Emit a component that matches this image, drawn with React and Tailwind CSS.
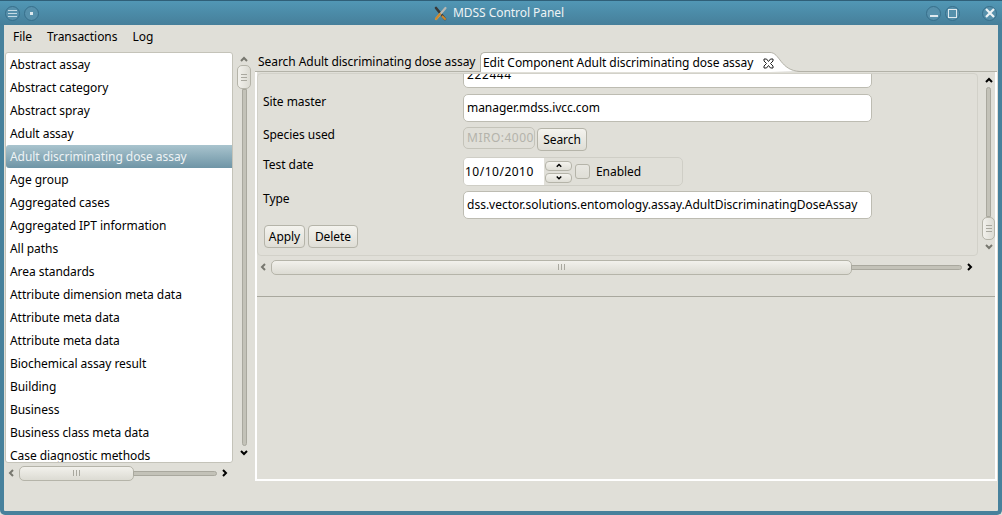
const entities = [
  'Abstract assay',
  'Abstract category',
  'Abstract spray',
  'Adult assay',
  'Adult discriminating dose assay',
  'Age group',
  'Aggregated cases',
  'Aggregated IPT information',
  'All paths',
  'Area standards',
  'Attribute dimension meta data',
  'Attribute meta data',
  'Attribute meta data',
  'Biochemical assay result',
  'Building',
  'Business',
  'Business class meta data',
  'Case diagnostic methods',
];

const Chevron = ({ dir, className = 'text-black' }) => {
  const paths = {
    up: 'M1 5 L4 2 L7 5',
    down: 'M1 2 L4 5 L7 2',
    left: 'M5 1 L2 4 L5 7',
    right: 'M3 1 L6 4 L3 7',
  };
  return (
    <svg width="8" height="8" viewBox="0 0 8 8" fill="none" stroke="currentColor" strokeWidth="2" className={className}>
      <path d={paths[dir]} />
    </svg>
  );
};

const Grip = ({ vertical }) => (
  <div className={vertical ? 'flex flex-col gap-[2px]' : 'flex gap-[2px]'}>
    {[0, 1, 2].map((i) => (
      <div key={i} className={vertical ? 'h-px w-[6px] bg-[#a9a89f]' : 'h-[6px] w-px bg-[#a9a89f]'} />
    ))}
  </div>
);

const TitleButton = ({ children, className = '' }) => (
  <div className={`flex h-[15px] w-[15px] items-center justify-center rounded-full border border-[#376f8b] bg-[#5690ab] ${className}`}>
    {children}
  </div>
);

const TitleBar = () => (
  <div className="-mx-[4px] flex h-[25px] shrink-0 items-center border-t border-[#2f5f78] bg-gradient-to-b from-[#5197b5] to-[#467f9a] pl-[5px] pr-[5px]">
    <TitleButton>
      <div className="flex flex-col gap-[2px]">
        <div className="h-px w-[9px] bg-[#c5dbe5]" />
        <div className="h-px w-[9px] bg-[#c5dbe5]" />
        <div className="h-px w-[9px] bg-[#c5dbe5]" />
      </div>
    </TitleButton>
    <TitleButton className="ml-[4px]">
      <div className="h-[3px] w-[3px] bg-[#dfe9ee]" />
    </TitleButton>
    <div className="ml-[394px] flex items-center">
      <svg width="15" height="15" viewBox="0 0 15 15" fill="none" strokeLinecap="round">
        <path d="M3 2 L12 13" stroke="#3a3a38" strokeWidth="2.6" />
        <path d="M12.5 2 L3 13" stroke="#b8b8b2" strokeWidth="2.2" />
        <path d="M7 8 L3 13" stroke="#d08a2a" strokeWidth="2.2" />
        <path d="M9.5 10.5 L12 13" stroke="#c9872e" strokeWidth="2.2" />
      </svg>
      <span className="ml-[5px] whitespace-nowrap text-[#eef3f5]">MDSS Control Panel</span>
    </div>
    <TitleButton className="ml-auto">
      <div className="mt-[6px] h-[2px] w-[8px] bg-[#dfe9ee]" />
    </TitleButton>
    <TitleButton className="ml-[4px]">
      <div className="h-[9px] w-[9px] border border-[#dfe9ee]" />
    </TitleButton>
    <TitleButton className="ml-[22px]">
      <svg width="10" height="10" viewBox="0 0 10 10" stroke="#eef3f5" strokeWidth="2.2">
        <path d="M1 1 L9 9 M9 1 L1 9" />
      </svg>
    </TitleButton>
  </div>
);

const MenuBar = () => (
  <div className="flex h-[24px] shrink-0 items-center gap-[15px] pl-[9px] text-black">
    <span>File</span>
    <span>Transactions</span>
    <span>Log</span>
  </div>
);

const HScrollbar = ({ thumbClass, trackClass, gripClass = '' }) => (
  <div className="flex h-[16px] items-center">
    <div className="flex w-[14px] justify-center"><Chevron dir="left" className="text-[#77776f]" /></div>
    <div className={`flex h-[15px] items-center justify-center rounded-[5px] border border-[#b5b4a9] bg-gradient-to-b from-[#f2f1ec] to-[#dcdbd3] ${thumbClass}`}>
      <div className={gripClass}><Grip /></div>
    </div>
    <div className={`-ml-px h-[5px] rounded-r-[3px] border border-[#a9a89e] bg-[#c3c2b8] ${trackClass}`} />
    <div className="flex w-[14px] justify-center"><Chevron dir="right" /></div>
  </div>
);

const ListPane = () => (
  <div className="flex w-[250px] shrink-0 flex-col">
    <div className="flex h-[411px]">
      <div className="h-full w-[228px] overflow-hidden rounded-[3px] border border-[#c4c3b9] bg-white">
        {entities.map((name) => (
          <div
            key={name}
            className={
              name === 'Adult discriminating dose assay'
                ? 'flex h-[23px] items-center whitespace-nowrap rounded-l-[3px] bg-gradient-to-b from-[#a9c4ce] to-[#6f95a6] pl-[4px] pt-px text-[#eef3f5]'
                : 'flex h-[23px] items-center whitespace-nowrap pl-[4px] pt-px text-black'
            }
          >
            {name}
          </div>
        ))}
      </div>
      <div className="ml-[3px] flex w-[16px] flex-col items-center pt-[2px]">
        <div className="flex h-[11px] items-center"><Chevron dir="up" className="text-[#77776f]" /></div>
        <div className="flex h-[24px] w-[14px] items-center justify-center rounded-[5px] border border-[#b5b4a9] bg-gradient-to-r from-[#f2f1ec] to-[#dcdbd3]">
          <Grip vertical />
        </div>
        <div className="h-[357px] w-[5px] rounded-b-[3px] border border-[#a9a89e] bg-[#c3c2b8]" />
        <div className="flex h-[14px] items-center"><Chevron dir="down" /></div>
      </div>
    </div>
    <div className="mt-[2px]">
      <HScrollbar thumbClass="w-[115px]" trackClass="w-[84px]" />
    </div>
  </div>
);

const TabClose = () => (
  <svg width="11" height="11" viewBox="0 0 11 11" fill="white" stroke="#222" strokeWidth="1">
    <path d="M1 1 L3.5 1 L5.5 3.5 L7.5 1 L10 1 L10 3 L7.5 5.5 L10 8 L10 10 L7.5 10 L5.5 7.5 L3.5 10 L1 10 L1 8 L3.5 5.5 L1 3 Z" />
  </svg>
);

const Tabs = () => (
  <div className="flex h-[20px] shrink-0 items-end border-b border-[#b3b2a8]">
    <div className="flex h-[19px] w-[225px] items-center whitespace-nowrap pl-[3px]">Search Adult discriminating dose assay</div>
    <div className="z-20 -mb-px flex h-[20px] w-[290px] items-center whitespace-nowrap rounded-tl-[5px] border-l border-t border-[#b3b2a8] bg-white pl-[2px] pt-px">
      <span>Edit Component Adult discriminating dose assay</span>
      <span className="-mr-[4px] ml-auto"><TabClose /></span>
    </div>
    <svg width="30" height="20" viewBox="0 0 30 20" className="z-10 -mb-px shrink-0">
      <path d="M0 0.5 C10 0.5 10 18.5 30 19.5 L0 20 Z" fill="white" />
      <path d="M0 0.5 C10 0.5 10 18.5 30 19.5" fill="none" stroke="#b3b2a8" />
    </svg>
  </div>
);

const Field = ({ children, className = '' }) => (
  <div className={`flex w-[409px] items-center whitespace-nowrap rounded-[5px] border border-[#bdbcb2] bg-white pl-[3px] ${className}`}>
    {children}
  </div>
);

const Button = ({ children, className = '' }) => (
  <div className={`flex items-center justify-center rounded-[4px] border border-[#b5b4a9] bg-gradient-to-b from-[#f4f3ee] to-[#dfded6] ${className}`}>
    {children}
  </div>
);

const Label = ({ children }) => <div className="w-[205px] pl-[5px] leading-[16px]">{children}</div>;

const Form = () => (
  <div className="h-[183px] flex-1 overflow-hidden rounded-[4px] border border-[#d2d1c9]">
    {/* first row is scrolled almost out of view */}
    <div className="-mt-[7px] ml-[205px] flex h-[21px] w-[409px] items-end overflow-hidden rounded-[5px] border border-[#bdbcb2] bg-white pl-[3px]">
      <span className="mb-[3px] tracking-[0.6px]">222444</span>
    </div>
    <div className="mt-[6px] flex">
      <Label>Site master</Label>
      <Field className="h-[28px]">manager.mdss.ivcc.com</Field>
    </div>
    <div className="mt-[5px] flex">
      <Label>Species used</Label>
      <div className="flex h-[22px] w-[72px] items-center overflow-hidden whitespace-nowrap rounded-[5px] border border-[#c4c3b9] bg-[#e0dfd8] pl-[3px] tracking-[0.5px] text-[#b4b3ab]">MIRO:40002</div>
      <Button className="ml-[2px] mt-[1px] h-[23px] w-[50px]">Search</Button>
    </div>
    <div className="mt-[6px] flex">
      <Label>Test date</Label>
      <div className="flex h-[29px] w-[220px] items-center overflow-hidden rounded-[5px] border border-[#cfcec6]">
        <div className="flex h-full w-[80px] items-center bg-white pl-px tracking-[0.5px]">10/10/2010</div>
        <div className="ml-px flex w-[27px] flex-col gap-[2px]">
          <Button className="h-[10px] w-[27px]"><Chevron dir="up" className="h-[6px] w-[6px]" /></Button>
          <Button className="h-[10px] w-[27px]"><Chevron dir="down" className="h-[6px] w-[6px]" /></Button>
        </div>
        <div className="ml-[3px] h-[15px] w-[15px] rounded-[3px] border border-[#b5b4a9] bg-gradient-to-b from-[#e8e7e1] to-[#dfded6]" />
        <span className="ml-[6px]">Enabled</span>
      </div>
    </div>
    <div className="mt-[5px] flex">
      <Label>Type</Label>
      <Field className="h-[28px] tracking-[0px]">dss.vector.solutions.entomology.assay.AdultDiscriminatingDoseAssay</Field>
    </div>
    <div className="ml-[6px] mt-[6px] flex gap-[3px]">
      <Button className="h-[23px] w-[41px]">Apply</Button>
      <Button className="h-[23px] w-[50px]">Delete</Button>
    </div>
  </div>
);

const EditorPane = () => (
  <div className="flex min-w-0 flex-1 flex-col">
    <Tabs />
    <div className="flex-1 border-x-2 border-b-2 border-white">
      <div className="flex pt-[1px]">
        <Form />
        <div className="flex w-[17px] flex-col items-center pl-[4px]">
          <div className="flex h-[14px] items-center pt-[2px]"><Chevron dir="up" /></div>
          <div className="h-[130px] w-[5px] rounded-t-[3px] border border-[#a9a89e] bg-[#c3c2b8]" />
          <div className="flex h-[23px] w-[13px] shrink-0 items-center justify-center rounded-[5px] border border-[#b5b4a9] bg-gradient-to-r from-[#f2f1ec] to-[#dcdbd3]">
            <Grip vertical />
          </div>
          <div className="flex h-[14px] items-center"><Chevron dir="down" className="text-[#77776f]" /></div>
        </div>
      </div>
      <div className="mt-[3px]">
        <HScrollbar thumbClass="w-[581px]" trackClass="w-[111px]" gripClass="ml-[-1px]" />
      </div>
      <div className="mt-[21px] h-px bg-[#a9a89e]" />
    </div>
  </div>
);

export default function App() {
  return (
    <div className="h-[515px] w-[1002px] overflow-hidden bg-[#e0dfd8] font-['Noto_Sans',sans-serif] text-[12px] tracking-[-0.05px] text-black">
      <div className="flex h-full flex-col rounded-[5px] border-x-[4px] border-b-[4px] border-[#47819c]">
        <TitleBar />
        <MenuBar />
        <div className="mt-[3px] flex h-[429px] pl-px pr-[1px]">
          <ListPane />
          <EditorPane />
        </div>
      </div>
    </div>
  );
}
